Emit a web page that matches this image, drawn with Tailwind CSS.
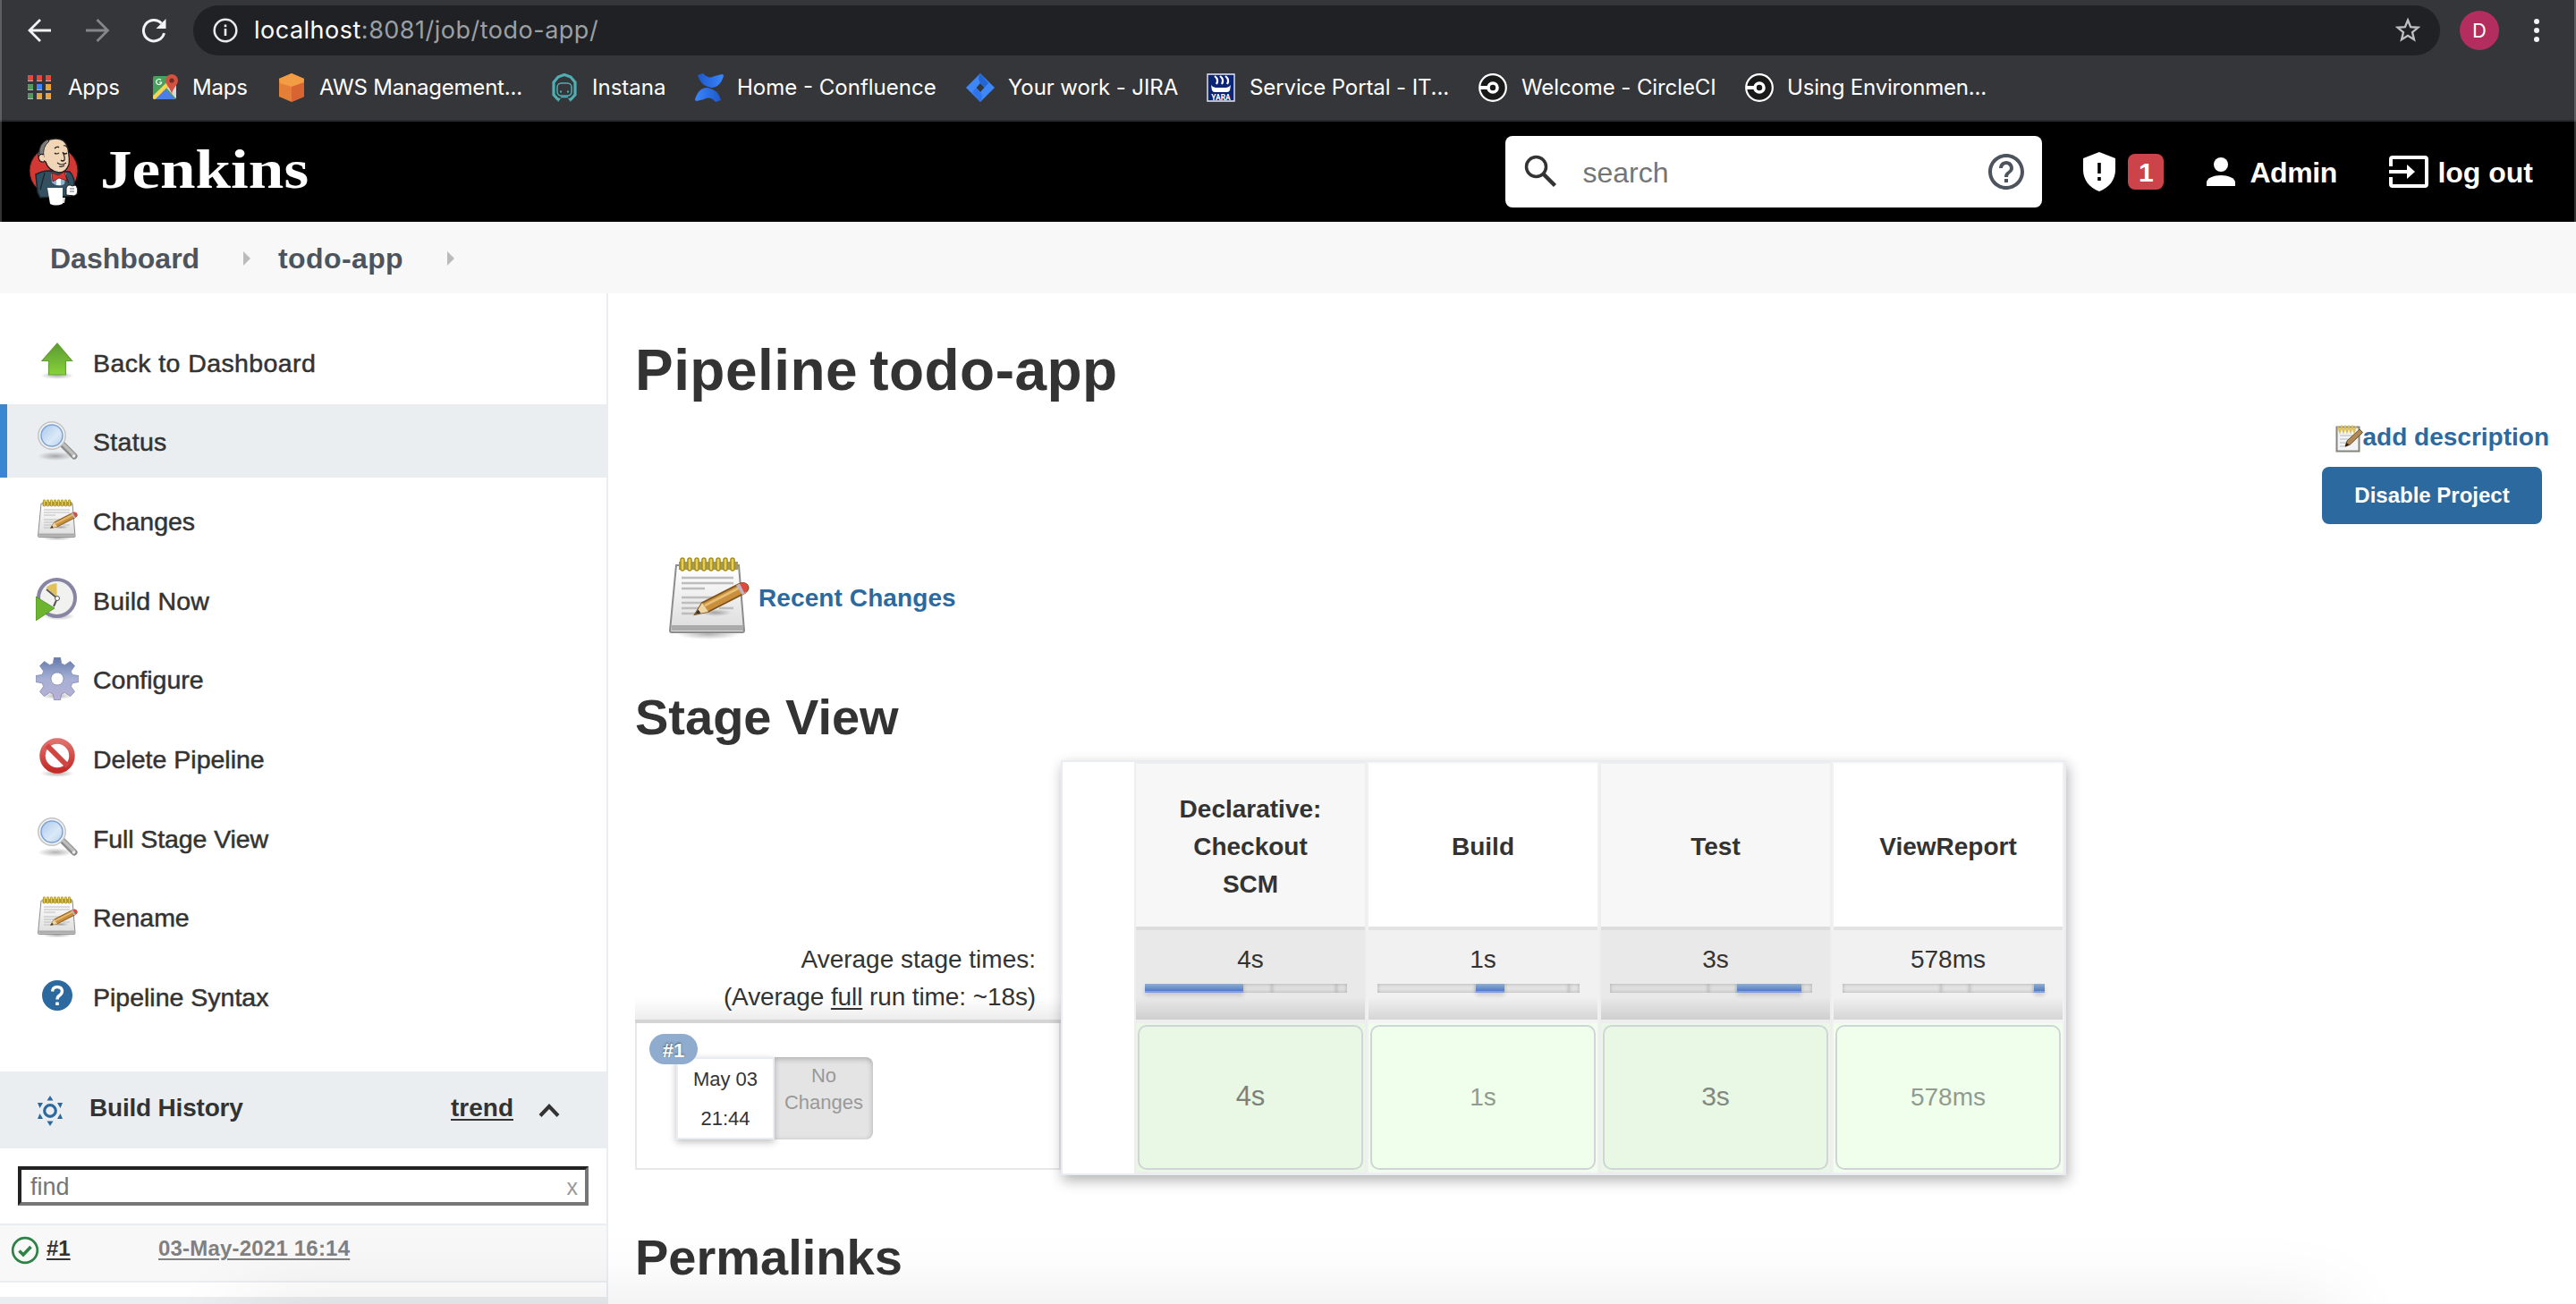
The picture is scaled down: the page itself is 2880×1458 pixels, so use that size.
<!DOCTYPE html>
<html lang="en">
<head>
<meta charset="utf-8">
<title>todo-app [Jenkins]</title>
<script src="https://cdn.jsdelivr.net/npm/@tailwindcss/browser@4"></script>
</head>
<body class="w-[2880px] h-[1458px] overflow-hidden bg-white text-[#333] font-['Liberation_Sans',Arial,sans-serif]">
<svg class="absolute w-0 h-0">
  <defs>
    <linearGradient id="paper" x1="0" y1="0" x2="0" y2="1"><stop offset="0" stop-color="#fff"/><stop offset="1" stop-color="#dcdcdc"/></linearGradient>
    <linearGradient id="lens" x1="0" y1="0" x2="1" y2="1"><stop offset="0" stop-color="#a9c7ea"/><stop offset=".6" stop-color="#dbe9f8"/><stop offset="1" stop-color="#b5d0ee"/></linearGradient>
    <linearGradient id="green" x1="0" y1="0" x2="0" y2="1"><stop offset="0" stop-color="#5c9a32"/><stop offset="1" stop-color="#86d23a"/></linearGradient>
    <linearGradient id="gear" x1="0" y1="0" x2="0" y2="1"><stop offset="0" stop-color="#6279ab"/><stop offset=".5" stop-color="#a6b0d4"/><stop offset="1" stop-color="#b9b0d6"/></linearGradient>
    <linearGradient id="stop" x1="0" y1="0" x2="0" y2="1"><stop offset="0" stop-color="#e0706c"/><stop offset="1" stop-color="#c42b27"/></linearGradient>
    <linearGradient id="blueA" x1="0" y1="0" x2="1" y2="0"><stop offset="0" stop-color="#1d58cc"/><stop offset="1" stop-color="#3b86fb"/></linearGradient>
    <linearGradient id="blueB" x1="0" y1="0" x2="1" y2="0"><stop offset="0" stop-color="#3b86fb"/><stop offset="1" stop-color="#1d58cc"/></linearGradient>
    <radialGradient id="shade"><stop offset="0" stop-color="#000" stop-opacity=".3"/><stop offset="1" stop-color="#000" stop-opacity="0"/></radialGradient>
    <symbol id="i-search" viewBox="0 0 48 48">
      <ellipse cx="22" cy="41" rx="20" ry="5" fill="url(#shade)"/>
      <path d="M30 28 43 41" stroke="#8b8b8b" stroke-width="7" stroke-linecap="round"/>
      <path d="M31 28 43 40" stroke="#bdbdbd" stroke-width="3.500" stroke-linecap="round"/>
      <circle cx="42.500" cy="41" r="1.800" fill="#eee"/>
      <circle cx="18" cy="18" r="15.200" fill="#f2f2f2" stroke="#c3c3c3" stroke-width="1.500"/>
      <circle cx="18" cy="18" r="12" fill="url(#lens)" stroke="#7da3d6" stroke-width="1.500"/>
    </symbol>
    <symbol id="i-note" viewBox="0 0 48 48">
      <ellipse cx="24" cy="44.500" rx="18" ry="3" fill="url(#shade)"/>
      <path d="M6 6h35l3 36.500q0 1-1 1H3.500q-1 0-1-1z" fill="url(#paper)" stroke="#8c8c8c" stroke-width="1"/>
      <path d="M3.300 39.500h40.200v3h-40.200z" fill="#ababab"/>
      <path d="M7.500 4h33v4.500h-33z" fill="#a59a5e"/>
      <path d="M9.500 3v5M13.500 3v5M17.500 3v5M21.500 3v5M25.500 3v5M29.500 3v5M33.500 3v5M37.500 3v5" stroke="#a88d1d" stroke-width="2.800" stroke-linecap="round"/>
      <path d="M9.500 3v5M13.500 3v5M17.500 3v5M21.500 3v5M25.500 3v5M29.500 3v5M33.500 3v5M37.500 3v5" stroke="#e5cf55" stroke-width="1.300" stroke-linecap="round"/>
      <path d="M9 13h29M9 16h29M9 19h13M9 24h25M9 27h20M9 30h14M9 33h10M30 30h8" stroke="#bdbdbd" stroke-width="1.200"/>
      <ellipse cx="28" cy="32.500" rx="9" ry="2" fill="url(#shade)"/>
      <path d="M16.500 33.500 20.500 27 41 16.500q3.500-1.500 5 1 1 2-1.500 4L24 32z" fill="#c98f3c" stroke="#7c5219" stroke-width=".9"/>
      <path d="M22 28.500 41.500 18.500" stroke="#e8bd74" stroke-width="1.500"/>
      <path d="M16.500 33.500 20.500 27 24 32z" fill="#eed6a4"/>
      <path d="M16.500 33.500 18.200 30.700 19.800 32.700z" fill="#333"/>
      <path d="M39.500 17.300 41.500 16.300 45.500 21.300 43 22.600z" fill="#c0b6bf"/>
      <path d="M41.500 16.300q3-1.300 4.500.8 1 2.200-1.800 4.500z" fill="#e0493f"/>
    </symbol>
  </defs>
</svg>

<!-- Browser chrome -->
<div class="relative h-[136px] bg-[#35363a] border-b-2 border-[#27282b] text-white font-[Inter,sans-serif]">
  <div class="flex items-center pt-[6px] h-[62px]">
    <svg class="ml-[31px] w-[28px] h-[28px]" viewBox="0 0 28 28" fill="none" stroke="#f1f3f4" stroke-width="2.800"><path d="M26 14H3M14 2 2 14l12 12"/></svg>
    <svg class="ml-[36px] w-[28px] h-[28px]" viewBox="0 0 28 28" fill="none" stroke="#85868a" stroke-width="2.800"><path d="M1 14h24M13.500 2l12 12-12 12"/></svg>
    <svg class="ml-[35px] w-[28px] h-[28px]" viewBox="0 0 28 28"><path d="M22.500 6A11.700 11.700 0 1 0 25.500 17" fill="none" stroke="#f1f3f4" stroke-width="3"/><path d="M27.500 1v11h-11z" fill="#f1f3f4"/></svg>
    <div class="ml-[30px] flex items-center w-[2512px] h-[56px] rounded-full bg-[#202124] pl-[21px] pr-[21px]">
      <svg class="w-[30px] h-[30px] shrink-0" viewBox="0 0 30 30"><circle cx="15" cy="15" r="12.300" fill="none" stroke="#e8eaed" stroke-width="2.500"/><path d="M13.700 13h2.600v8h-2.600zM13.700 8.500h2.600v2.700h-2.600z" fill="#e8eaed"/></svg>
      <div class="ml-[17px] text-[27px] leading-[56px] tracking-[0.5px] text-[#9aa0a6] whitespace-nowrap"><span class="text-white">localhost</span>:8081/job/todo-app/</div>
      <svg class="ml-auto w-[30px] h-[30px]" viewBox="0 0 30 30"><path d="m15 3.500 3.100 7.700 8.300.6-6.400 5.300 2 8.100-7-4.400-7 4.400 2-8.100-6.400-5.300 8.300-.6z" fill="none" stroke="#bdc1c6" stroke-width="2.300"/></svg>
    </div>
    <div class="ml-[22px] size-[44px] rounded-full bg-[#b32d5e] flex items-center justify-center text-[22px]">D</div>
    <div class="ml-[39px] flex flex-col gap-[4px]"><i class="size-[6px] rounded-full bg-[#f1f3f4]"></i><i class="size-[6px] rounded-full bg-[#f1f3f4]"></i><i class="size-[6px] rounded-full bg-[#f1f3f4]"></i></div>
  </div>
  <div class="flex items-center h-[72px] pl-[28px] text-[24px] leading-[70px] whitespace-nowrap">
    <svg class="size-[32px]" viewBox="0 0 32 32"><path d="M3 2h6v6H3zM13 2h6v6h-6zM23 2h6v6h-6z" fill="#e74639"/><path d="M3 12h6v6H3zM3 22h6v6H3z" fill="#529a5b"/><path d="M13 12h6v6h-6z" fill="#3f87f0"/><path d="M23 12h6v6h-6zM13 22h6v6h-6zM23 22h6v6h-6z" fill="#e8a33a"/><path d="M3 8h6v1H3zM13 8h6v1h-6zM23 8h6v1h-6zM3 18h6v1H3zM13 18h6v1h-6zM23 18h6v1h-6zM3 28h6v1H3zM13 28h6v1h-6zM23 28h6v1h-6z" fill="#b9b9b9"/></svg>
    <span class="ml-[16px] w-[93px] tracking-[-0.2px]">Apps</span>
    <svg class="size-[32px]" viewBox="0 0 32 32"><path d="M4 3h18l6 8v16q0 2-2 2H4q-2 0-2-2V5q0-2 2-2z" fill="#4a9f5c"/><path d="M28 12 17 16l10.500 12q.5-.5.500-1z" fill="#d8d9dc"/><path d="M4 29 15.500 17.500 27 29z" fill="#4b7fe8"/><path d="M2 25 18 9.500l2.500 3.500L4.500 29H3q-1-.5-1-2z" fill="#f7d54f"/><path d="M11 7.500a3 3 0 1 0 .7 2.500H9" fill="none" stroke="#fff" stroke-width="1.200"/><path d="M23 1a7 7 0 0 1 7 7c0 5-5.500 8-7 15-1.500-7-7-10-7-15a7 7 0 0 1 7-7z" fill="#d5503f"/><circle cx="23" cy="8" r="2.600" fill="#712c25"/></svg>
    <span class="ml-[14px] w-[95px] tracking-[-0.2px]">Maps</span>
    <svg class="size-[32px]" viewBox="0 0 32 32"><path d="m16 0 14 6v20l-14 6-14-6V6z" fill="#e57f37"/><path d="m16 0 14 6-1 5-13 4L3 11 2 6z" fill="#f29c43"/><path d="M16 15 30 10v16l-14 6z" fill="#d96433"/></svg>
    <span class="ml-[15px] w-[258px] tracking-[-0.2px]">AWS Management...</span>
    <svg class="size-[32px]" viewBox="0 0 32 32"><path d="M9 29.500 4 24V10l5-6 7-2.500L23 4l5 6v14l-5 5.500" fill="none" stroke="#4eb0b2" stroke-width="3.200"/><rect x="8" y="11" width="16" height="14" rx="4.500" fill="none" stroke="#4eb0b2" stroke-width="1.500"/><path d="M11 19.500h2v2h-2zM19 19.500h2v2h-2zM12 26h8v1.300h-8zM7 27l5 1-3 4zM25 27l-5 1 3 4z" fill="#4eb0b2"/></svg>
    <span class="ml-[15px] w-[115px]">Instana</span>
    <svg class="size-[32px]" viewBox="0 0 32 32"><path d="M3 2 9 0q6 7 13 3l8-2q2 0 2 2-4 13-14 13Q6 14 3 2z" fill="url(#blueA)"/><path d="M29 30l-6 2q-6-7-13-3l-8 2q-2 0-2-2 4-13 14-13 12 2 15 14z" fill="url(#blueB)"/></svg>
    <span class="ml-[15px] w-[256px]">Home - Confluence</span>
    <svg class="size-[32px]" viewBox="0 0 32 32"><path fill-rule="evenodd" d="M16 0 32 16 16 32 0 16zM16 11l-4.500 5 4.500 5 4.500-5z" fill="#3d87f9"/><path d="M16 0q-4 6 0 11l4.500 5L25 11z" fill="#2566d6"/><path d="M16 32q4-6 0-11l-4.500-5L7 21z" fill="#2f74ea"/></svg>
    <span class="ml-[15px] w-[222px] tracking-[-0.1px]">Your work - JIRA</span>
    <svg class="size-[32px]" viewBox="0 0 32 32"><path d="M1 1h30v30H1z" fill="#0c2474" stroke="#e7e9f2" stroke-width="1.400"/><path d="M9 3q5 4 2 9M15 3q5 4 2 9M21 3q5 4 2 9" stroke="#fff" stroke-width="2.200" fill="none"/><path d="M5 13q2 3 5 3h12q3 0 5-3l-1 6q-1 2-3 2H9q-2 0-3-2z" fill="#fff"/><text x="16" y="29.500" text-anchor="middle" font-family="Roboto" font-weight="700" font-size="8.500" fill="#fff">YARA</text></svg>
    <span class="ml-[16px] w-[256px] tracking-[-0.1px]">Service Portal - IT...</span>
    <svg class="size-[32px]" viewBox="0 0 32 32"><circle cx="16" cy="16" r="14.800" fill="#191919" stroke="#fff" stroke-width="2.200"/><path d="M1 14h10v4H1z" fill="#fff"/><circle cx="16" cy="16" r="5" fill="#191919" stroke="#fff" stroke-width="3.600"/></svg>
    <span class="ml-[16px] w-[250px] tracking-[-0.1px]">Welcome - CircleCI</span>
    <svg class="size-[32px]" viewBox="0 0 32 32"><circle cx="16" cy="16" r="14.800" fill="#191919" stroke="#fff" stroke-width="2.200"/><path d="M1 14h10v4H1z" fill="#fff"/><circle cx="16" cy="16" r="5" fill="#191919" stroke="#fff" stroke-width="3.600"/></svg>
    <span class="ml-[15px] tracking-[-0.2px]">Using Environmen...</span>
  </div>
</div>

<!-- Jenkins header -->
<header class="flex items-center h-[112px] bg-black text-white text-[32px] font-bold">
  <svg class="ml-[30px] w-[60px] h-[80px]" viewBox="0 0 60 80">
    <circle cx="30" cy="39" r="27" fill="#d33833" stroke="#33191a" stroke-width="1"/>
    <path d="M10 43q8-4 14-4l24 1q6 7 5 15l-4 12-34 2-3-6z" fill="#335061" stroke="#1c262c" stroke-width="1.500"/>
    <path d="M20 41 15 60M42 41l5 12" stroke="#1c262c" stroke-width="1.200"/>
    <path d="M27 42q8 8 17-1l-2 13q-8 4-14-2z" fill="#8fb3cc"/><path d="M33 46h5v9h-5z" fill="#fff"/>
    <path d="M16 26q-6-4-1-12Q20 3 32 3q12 0 14 12 2 11 1 17-3 9-11 9-12-2-15-12z" fill="#f0d6b7" stroke="#1f1f1f" stroke-width="1.300"/>
    <path d="M23 4Q13 9 14 20q3 1 5 4Q17 12 25 6z" fill="#7c7b7c" stroke="#1f1f1f" stroke-width=".8"/>
    <path d="M19 21q-5-2-6 3 1 6 6 5" fill="#f0d6b7" stroke="#1f1f1f" stroke-width="1.300"/>
    <path d="M31 14q3-3 5-1M41 11q3-1 4 2M31 19q2 2 5 0M41 19q2 2 4 0M40 18q3 6 2 9-2 2-4 0M34 30q5 4 10 0M36 34q3 1 6-1" fill="none" stroke="#1f1f1f" stroke-width="1.200"/>
    <path d="M28 41l7 3 7-4 3 10-9-3-7 4z" fill="#d33833" stroke="#6b1513" stroke-width=".8"/>
    <path d="M23 58h17v18q-8 3-14 0z" fill="#fff"/><path d="M40 69h3l-1 6h-2z" fill="#ddd"/>
    <path d="M44 58q2-5 7-2l3-1q4 3 2 10l-3 2-9-1z" fill="#fff" stroke="#1f1f1f" stroke-width="1"/><path d="M48 59h5M48 62h5" stroke="#444" stroke-width=".8"/>
  </svg>
  <div class="ml-[22px] w-[240px] h-[112px] leading-[107px] text-[61px] font-['Liberation_Serif',serif] origin-left scale-x-[1.165] whitespace-nowrap">Jenkins</div>
  <div class="ml-auto flex items-center w-[600px] h-[80px] rounded-[8px] bg-white pl-[20px] pr-[18px] font-normal">
    <svg class="size-[40px]" viewBox="0 0 40 40" fill="none" stroke="#333"><circle cx="14.500" cy="14.500" r="11" stroke-width="3.500"/><path d="M22.500 22.500 35.500 35.500" stroke-width="4.500"/></svg>
    <span class="ml-[26px] pt-[2px] text-[#757575]">search</span>
    <svg class="ml-auto size-[48px] -mr-[2px]" viewBox="0 0 24 24"><path fill="#4d545d" d="M11 18h2v-2h-2v2zm1-16C6.480 2 2 6.480 2 12s4.480 10 10 10 10-4.480 10-10S17.520 2 12 2zm0 18c-4.410 0-8-3.590-8-8s3.590-8 8-8 8 3.590 8 8-3.590 8-8 8zm0-14c-2.210 0-4 1.790-4 4h2c0-1.100.9-2 2-2s2 .9 2 2c0 2-3 1.750-3 5h2c0-2.250 3-2.500 3-5 0-2.210-1.790-4-4-4z"/></svg>
  </div>
  <svg class="ml-[46px] w-[36px] h-[44px]" viewBox="0 0 36 44"><path fill-rule="evenodd" d="M18 0 36 7v13c0 11-7 20-18 24C7 40 0 31 0 20V7zM16.200 12h3.600v12h-3.600zM16.200 28h3.600v4h-3.600z" fill="#fff"/></svg>
  <div class="ml-[14px] w-[40px] h-[40px] rounded-[8px] bg-[#cc4349] text-center leading-[42px] text-[30px]">1</div>
  <svg class="ml-[48px] w-[32px] h-[32px]" viewBox="0 0 32 32"><circle cx="16" cy="8" r="8" fill="#fff"/><path d="M0 32v-4c0-5 8-8 16-8s16 3 16 8v4z" fill="#fff"/></svg>
  <span class="ml-[16px] pt-[2px] w-[99px] tracking-[-0.4px]">Admin</span>
  <svg class="ml-[57px] w-[44px] h-[36px]" viewBox="0 0 44 36"><path d="M2 12V4q0-2 2-2h36q2 0 2 2v28q0 2-2 2H4q-2 0-2-2v-8" fill="none" stroke="#fff" stroke-width="4"/><path d="M0 16h20v-6l9 8-9 8v-6H0z" fill="#fff"/></svg>
  <span class="ml-[10px] pt-[2px] mr-[48px]">log out</span>
</header>

<nav class="flex items-center h-[80px] bg-[#f8f8f8] pl-[56px] pt-[1px] text-[32px] font-bold text-[#4d545d]">
  <span class="w-[216px]">Dashboard</span>
  <svg class="w-[8px] h-[16px]" viewBox="0 0 8 16"><path d="M0 0 8 8 0 16z" fill="#bbb"/></svg>
  <span class="ml-[31px] w-[189px] tracking-[0.4px]">todo-app</span>
  <svg class="w-[8px] h-[16px]" viewBox="0 0 8 16"><path d="M0 0 8 8 0 16z" fill="#bbb"/></svg>
</nav>

<div class="flex h-[1130px]">
  <!-- Side panel -->
  <aside class="w-[680px] h-[1130px] shrink-0 border-r-2 border-[#eaeef2] pt-[35px]">
    <div class="flex flex-col gap-[6.67px] text-[28.5px] [-webkit-text-stroke:0.5px_#333] [&>div]:flex [&>div]:h-[82px] [&>div]:items-center [&>div]:pl-[40px] [&_svg]:size-[48px] [&_span]:ml-[16px] [&_span]:pt-[4px]">
      <div><svg viewBox="0 0 48 48"><ellipse cx="24" cy="40" rx="19" ry="4" fill="url(#shade)"/><path d="M24 4 40.500 23.500H33.500V39h-19V23.500H7z" fill="url(#green)" stroke="#64a134" stroke-width="1.200"/></svg><span class="tracking-[0.4px]">Back to Dashboard</span></div>
      <div class="bg-[#ebeef1] shadow-[inset_8px_0_0_#3b86d0]"><svg viewBox="0 0 48 48"><use href="#i-search"/></svg><span class="tracking-[0.3px]">Status</span></div>
      <div><svg viewBox="0 0 48 48"><use href="#i-note"/></svg><span>Changes</span></div>
      <div><svg viewBox="0 0 48 48"><ellipse cx="26" cy="43" rx="18" ry="4.500" fill="url(#shade)"/><circle cx="23.500" cy="22.500" r="20.500" fill="#f1f1ef" stroke="#8785a3" stroke-width="4"/><path d="M23.500 21V6q-8 1-12 5z" fill="#e0c15c"/><path d="M12 13 24 23l-4 9" fill="none" stroke="#555" stroke-width="2"/><circle cx="24" cy="23" r="2.500" fill="#fff" stroke="#555"/><path d="M0 21 21 34 0 48z" fill="#6db42f" stroke="#4c8c22" stroke-width=".8"/></svg><span class="tracking-[0.2px]">Build Now</span></div>
      <div><svg viewBox="0 0 48 48"><ellipse cx="24" cy="43" rx="18" ry="4" fill="url(#shade)"/><path fill-rule="evenodd" d="M20.500 0h7l1.200 7 3.800 1.600L38.500 4.500l5 5-4.200 6 1.600 4 7.100 1v7l-7 1.200-1.700 3.800 4.200 6-5 5-6-4.200-3.800 1.700-1.200 6.500h-7l-1.200-6.500-3.800-1.700-6 4.200-5-5 4.200-6L7 28.700 0 27.500v-7l7-1 1.700-4-4.200-6 5-5 6 4.100L19.300 7zM24 17a7 7 0 1 0 .01 0z" fill="url(#gear)" stroke="#8088ad" stroke-width=".8"/></svg><span>Configure</span></div>
      <div><svg viewBox="0 0 48 48"><ellipse cx="24" cy="42" rx="19" ry="4" fill="url(#shade)"/><circle cx="24" cy="22" r="16.500" fill="#fff" stroke="url(#stop)" stroke-width="6.500"/><path d="M12.500 10.500l23 23" stroke="#cf4642" stroke-width="6"/></svg><span>Delete Pipeline</span></div>
      <div><svg viewBox="0 0 48 48"><use href="#i-search"/></svg><span class="tracking-[-0.1px]">Full Stage View</span></div>
      <div><svg viewBox="0 0 48 48"><use href="#i-note"/></svg><span>Rename</span></div>
      <div><svg viewBox="0 0 48 48"><circle cx="24" cy="24" r="17" fill="#2c699e"/><path d="M18.500 19.500q.5-5 5.500-5t5.500 4.500q0 3-3 5-2.500 1.700-2.500 4.500" fill="none" stroke="#fff" stroke-width="3.400"/><path d="M22.200 31.500h3.600v3.500h-3.600z" fill="#fff"/></svg><span>Pipeline Syntax</span></div>
    </div>
    <div class="mt-[43.650px] flex items-center h-[86px] bg-[#ebeef1] pl-[40px] text-[28px] font-bold">
      <svg class="w-[32px] h-[34px] mt-[2px]" viewBox="0 0 32 34"><circle cx="16" cy="17" r="6.300" fill="none" stroke="#2c699e" stroke-width="3.200"/><path d="M16 0l3.500 5.500h-7zM16 34l3.500-5.500h-7zM2 8h6L4.500 14zM30 8h-6l3.500 6zM2 26h6L4.500 20zM30 26h-6l3.500-6z" fill="#2c699e"/></svg>
      <span class="ml-[28px] -mt-[3px] tracking-[-0.2px]">Build History</span>
      <span class="ml-auto -mt-[3px] underline decoration-2 underline-offset-[3px]">trend</span>
      <svg class="ml-[27px] mr-[51px] w-[26px] h-[18px]" viewBox="0 0 26 18"><path d="M3 15.500 13 5 23 15.500" fill="none" stroke="#333" stroke-width="4"/></svg>
    </div>
    <div class="mt-[20px] mx-[20px] flex items-center justify-between h-[44px] w-[638px] border-4 border-t-[#222] border-l-[#222] border-r-[#767676] border-b-[#767676] pl-[10px] pr-[8px] pt-[2px] text-[27px] leading-[36px] text-[#757575]"><span>find</span><span class="text-[25px] text-[#999]">x</span></div>
    <div class="mt-[20px] flex items-center h-[66px] border-y-2 border-[#eaeef2] bg-[#f8f8f8] text-[24px] font-bold">
      <svg class="ml-[12px] -mt-[5px] size-[32px]" viewBox="0 0 32 32"><circle cx="16" cy="16" r="13.800" fill="none" stroke="#2f8245" stroke-width="2.700"/><path d="M9.500 16.500l4.500 4.500 8.500-9" fill="none" stroke="#2f8245" stroke-width="3.600"/></svg>
      <span class="ml-[8px] -mt-[9px] w-[125px] underline decoration-2 underline-offset-[3px]">#1</span>
      <span class="-mt-[9px] text-[#808080] tracking-[0.2px] underline decoration-2 underline-offset-[3px]">03-May-2021 16:14</span>
    </div>
    <div class="mt-[16px] h-[20px] bg-[#ebeef1]"></div>
  </aside>

  <!-- Main panel -->
  <main class="flex-1 pl-[30px] pt-[46px] font-bold">
    <h1 class="text-[64px] leading-[80px] tracking-[0.45px] [word-spacing:-5px]">Pipeline todo-app</h1>
    <div class="mt-[16px] mr-[30px] flex items-center justify-end h-[36px] text-[28px] leading-[36px] text-[#2c699e]">
      <svg class="size-[32px] mt-[4px] shrink-0" viewBox="0 0 32 32"><path d="M2.500 3.500h25v27h-25z" fill="#f3f4f6" stroke="#85857d" stroke-width="2"/><path d="M6 13h15M6 17h13M6 21h10M6 25h8" stroke="#c7cacf" stroke-width="1.400"/><path d="M4 3l2 6 2-6 2 6 2-6 2 6 2-6 2 6 2-6 2 6 2-6" fill="none" stroke="#ddbe55" stroke-width="1.800"/><path d="M12 25l2-6L28 6l3.500 3.500L17.500 23z" fill="#b08a56" stroke="#6f4d24" stroke-width="1"/><path d="M12 25.500l1.500-4.500 3 2.500z" fill="#2b1c0c"/></svg>
      <span class="pt-[2px]">add description</span>
    </div>
    <div class="mt-[16px] ml-auto mr-[38px] w-[246px] h-[64px] rounded-[8px] bg-[#2c699e] text-center text-[24px] leading-[64px] text-white">Disable Project</div>
    <div class="mt-[34px] ml-[34px] flex items-center h-[96px] text-[28px] text-[#2c699e]">
      <svg class="size-[96px]" viewBox="0 0 48 48"><use href="#i-note"/></svg>
      <span class="ml-[8px] pt-[2px] tracking-[0.1px]">Recent Changes</span>
    </div>
    <h2 class="mt-[54px] text-[56px] leading-[64px]">Stage View</h2>

    <div class="mt-[16px] flex h-[464px] font-normal text-[28px]">
      <div class="w-[476px] pt-[190px]">
        <div class="h-[104px] pt-[12px] pr-[28px] border-b-4 border-b-[#d4d4d4] bg-linear-to-b from-transparent from-75% to-[#ededed] text-right leading-[42px]">Average stage times:<br><span class="tracking-[-0.1px]">(Average <span class="underline decoration-2 underline-offset-[3px]">full</span> run time: ~18s)</span></div>
        <div class="relative h-[164px] border-2 border-t-0 border-[#e8e8e8] pl-[44px] pt-[38px]">
          <div class="flex text-[22px] text-center">
            <div class="w-[110px] h-[92px] border-2 border-[#e9edf2] bg-white shadow-[0_3px_8px_rgba(0,0,0,0.25)] leading-[44px] pt-[1px]">May 03<br>21:44</div>
            <div class="w-[110px] h-[92px] rounded-r-[8px] bg-[#e4e4e4] shadow-[inset_0_2px_6px_rgba(0,0,0,0.25)] pt-[6px] leading-[30px] text-[#999]">No<br>Changes</div>
          </div>
          <div class="absolute left-[14px] top-[12px] w-[54px] h-[34px] rounded-full bg-[#8facce] text-center text-[22px] font-bold leading-[38px] text-white [text-shadow:0_-1px_2px_rgba(0,0,0,0.5)]">#1</div>
        </div>
      </div>
      <div class="relative w-[1124px] h-[464px] flex border-2 border-[#e9edf1] bg-white pl-[80px] shadow-[2px_6px_14px_rgba(0,0,0,0.3)] text-center">
        <!-- Declarative: Checkout SCM -->
        <div class="w-[260px] border-x-2 border-[#eeeeee] bg-[#eeeeee]">
          <div class="h-[188px] border-t-2 border-t-[#eeeeee] border-b-4 border-b-[#dddddd] bg-[#f7f7f7] px-[40px] flex items-center justify-center pt-[4px] font-bold leading-[42px]">Declarative: Checkout SCM</div>
          <div class="h-[100px] pt-[12px] bg-linear-to-b from-[#e9e9e9] from-75% to-[#cfcfcf]">
            <div class="leading-[42px]">4s</div>
            <div class="mt-[6px] ml-[10px] flex w-[226px] h-[10px]"><i class="w-[110px] bg-linear-to-b from-[#8fb0d0] to-[#5579c8] border-b-2 border-[#7ea3dc] shadow-[0_3px_5px_rgba(0,0,0,0.15)]"></i><i class="w-[32px] bg-[#dfdfdf] shadow-[inset_0_0_4px_#aaa]"></i><i class="w-[72px] bg-[#dfdfdf] shadow-[inset_0_0_4px_#aaa]"></i><i class="w-[12px] bg-[#dfdfdf] shadow-[inset_0_0_4px_#aaa]"></i></div>
          </div>
          <div class="mt-[4px] h-[166px] bg-[#e9f8e5] p-[2px]"><div class="h-[162px] rounded-[10px] border-2 border-[#d0d4d8] leading-[156px] text-[31px] text-[#7c827a]">4s</div></div>
        </div>
        <!-- Build -->
        <div class="w-[260px] border-x-2 border-[#f1f1f1] bg-[#f4f4f4]">
          <div class="h-[188px] border-t-2 border-t-[#f8f8f8] border-b-4 border-b-[#e3e3e3] bg-white flex items-center justify-center pt-[4px] font-bold leading-[42px]">Build</div>
          <div class="h-[100px] pt-[12px] bg-linear-to-b from-[#f1f1f1] from-75% to-[#d5d5d5]">
            <div class="leading-[42px]">1s</div>
            <div class="mt-[6px] ml-[10px] flex w-[226px] h-[10px]"><i class="w-[110px] bg-[#e4e4e4] shadow-[inset_0_0_4px_#aaa]"></i><i class="w-[32px] bg-linear-to-b from-[#8fb0d0] to-[#5579c8] border-b-2 border-[#7ea3dc] shadow-[0_3px_5px_rgba(0,0,0,0.15)]"></i><i class="w-[72px] bg-[#e4e4e4] shadow-[inset_0_0_4px_#aaa]"></i><i class="w-[12px] bg-[#e4e4e4] shadow-[inset_0_0_4px_#aaa]"></i></div>
          </div>
          <div class="mt-[4px] h-[166px] bg-[#f0ffec] p-[2px]"><div class="h-[162px] rounded-[10px] border-2 border-[#d0d4d8] leading-[157px] text-[28px] text-[#919b8f]">1s</div></div>
        </div>
        <!-- Test -->
        <div class="w-[260px] border-x-2 border-[#eeeeee] bg-[#eeeeee]">
          <div class="h-[188px] border-t-2 border-t-[#eeeeee] border-b-4 border-b-[#dddddd] bg-[#f7f7f7] flex items-center justify-center pt-[4px] font-bold leading-[42px]">Test</div>
          <div class="h-[100px] pt-[12px] bg-linear-to-b from-[#e9e9e9] from-75% to-[#cfcfcf]">
            <div class="leading-[42px]">3s</div>
            <div class="mt-[6px] ml-[10px] flex w-[226px] h-[10px]"><i class="w-[110px] bg-[#dfdfdf] shadow-[inset_0_0_4px_#aaa]"></i><i class="w-[32px] bg-[#dfdfdf] shadow-[inset_0_0_4px_#aaa]"></i><i class="w-[72px] bg-linear-to-b from-[#8fb0d0] to-[#5579c8] border-b-2 border-[#7ea3dc] shadow-[0_3px_5px_rgba(0,0,0,0.15)]"></i><i class="w-[12px] bg-[#dfdfdf] shadow-[inset_0_0_4px_#aaa]"></i></div>
          </div>
          <div class="mt-[4px] h-[166px] bg-[#e9f8e5] p-[2px]"><div class="h-[162px] rounded-[10px] border-2 border-[#d0d4d8] leading-[156px] text-[30px] text-[#828980]">3s</div></div>
        </div>
        <!-- ViewReport -->
        <div class="w-[260px] border-x-2 border-[#f1f1f1] bg-[#f4f4f4]">
          <div class="h-[188px] border-t-2 border-t-[#f8f8f8] border-b-4 border-b-[#e3e3e3] bg-white flex items-center justify-center pt-[4px] font-bold leading-[42px]">ViewReport</div>
          <div class="h-[100px] pt-[12px] bg-linear-to-b from-[#f1f1f1] from-75% to-[#d5d5d5]">
            <div class="leading-[42px]">578ms</div>
            <div class="mt-[6px] ml-[10px] flex w-[226px] h-[10px]"><i class="w-[110px] bg-[#e4e4e4] shadow-[inset_0_0_4px_#aaa]"></i><i class="w-[32px] bg-[#e4e4e4] shadow-[inset_0_0_4px_#aaa]"></i><i class="w-[72px] bg-[#e4e4e4] shadow-[inset_0_0_4px_#aaa]"></i><i class="w-[12px] bg-linear-to-b from-[#8fb0d0] to-[#5579c8] border-b-2 border-[#7ea3dc] shadow-[0_3px_5px_rgba(0,0,0,0.15)]"></i></div>
          </div>
          <div class="mt-[4px] h-[166px] bg-[#f0ffec] p-[2px]"><div class="h-[162px] rounded-[10px] border-2 border-[#d0d4d8] leading-[157px] text-[28px] text-[#919b8f]">578ms</div></div>
        </div>
      </div>
    </div>
    <h2 class="mt-[60px] text-[56px] leading-[64px]">Permalinks</h2>
  </main>
</div>

<!-- Window edges and the soft shadow along the bottom -->
<div class="absolute left-0 top-0 w-[2px] h-[248px] bg-white/20"></div>
<div class="absolute left-[2878px] top-0 w-[2px] h-[248px] bg-white/20"></div>
<div class="absolute left-0 top-[1328px] w-[2880px] h-[130px] overflow-hidden"><div class="absolute left-[270px] top-[134px] w-[2340px] h-[80px] shadow-[0_0_90px_rgba(0,0,0,0.1)]"></div></div>
</body>
</html>
